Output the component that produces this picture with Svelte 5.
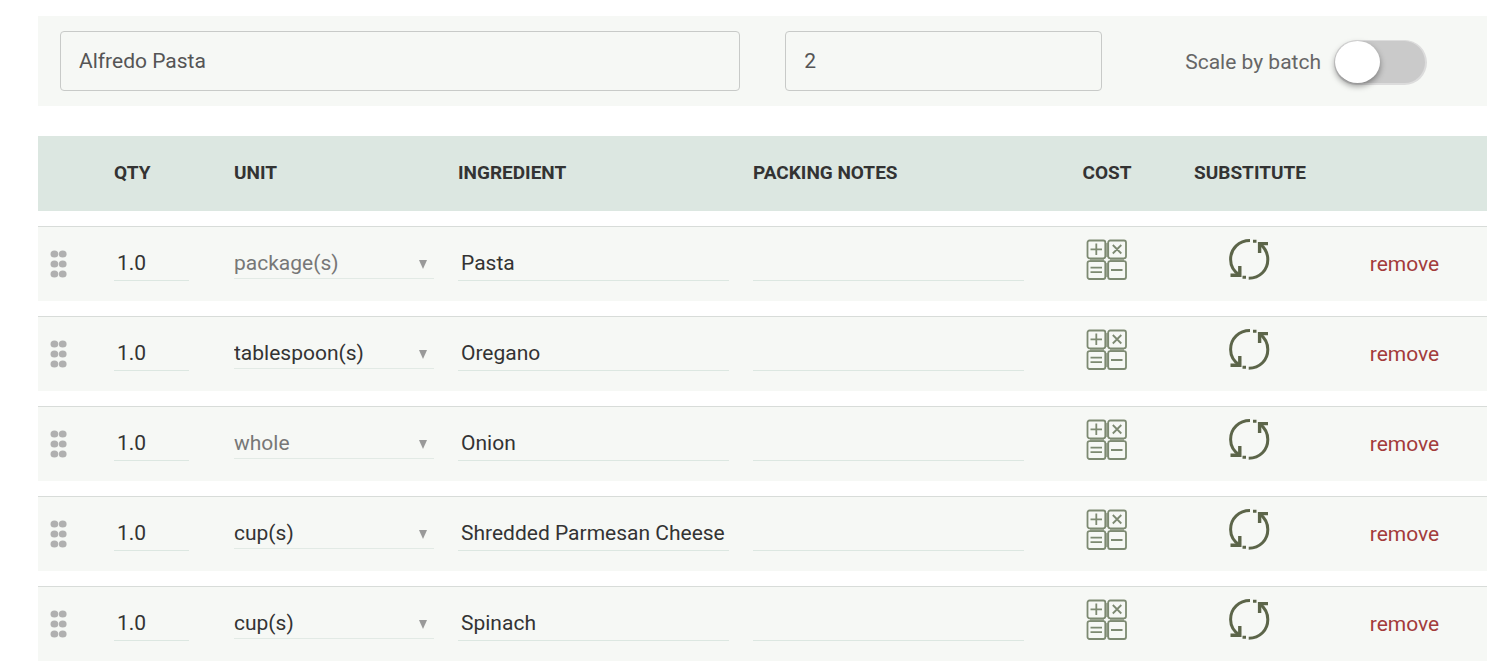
<script lang="ts">
	const units = ['package(s)', 'tablespoon(s)', 'whole', 'cup(s)'];

	let name = $state('Alfredo Pasta');
	let servings = $state('2');
	let scaleByBatch = $state(false);

	let rows = $state([
		{ id: 1, qty: '1.0', unit: 'package(s)', ingredient: 'Pasta', notes: '', muted: true },
		{ id: 2, qty: '1.0', unit: 'tablespoon(s)', ingredient: 'Oregano', notes: '', muted: false },
		{ id: 3, qty: '1.0', unit: 'whole', ingredient: 'Onion', notes: '', muted: true },
		{ id: 4, qty: '1.0', unit: 'cup(s)', ingredient: 'Shredded Parmesan Cheese', notes: '', muted: false },
		{ id: 5, qty: '1.0', unit: 'cup(s)', ingredient: 'Spinach', notes: '', muted: false }
	]);

	function remove(id: number) {
		rows = rows.filter((row) => row.id !== id);
	}
</script>

<main>
	<div class="recipe-bar">
		<input class="box" type="text" aria-label="Recipe name" bind:value={name} />
		<input class="box" type="text" aria-label="Servings" bind:value={servings} />
		<label class="scale">
			<span>Scale by batch</span>
			<input class="toggle" type="checkbox" role="switch" bind:checked={scaleByBatch} />
		</label>
	</div>

	<table>
		<colgroup>
			<col class="col-drag" />
			<col class="col-qty" />
			<col class="col-unit" />
			<col />
			<col />
			<col class="col-cost" />
			<col class="col-substitute" />
			<col class="col-remove" />
		</colgroup>
		<thead>
			<tr>
				<th></th>
				<th>QTY</th>
				<th>UNIT</th>
				<th>INGREDIENT</th>
				<th>PACKING NOTES</th>
				<th class="center">COST</th>
				<th class="center">SUBSTITUTE</th>
				<th></th>
			</tr>
		</thead>
		<tbody>
			{#each rows as row (row.id)}
				<tr>
					<td>
						<button class="icon drag" type="button" aria-label="Reorder">
							<svg width="17" height="28" viewBox="0 0 17 28" fill="#b0b0b0">
								{#each [4, 14, 24] as y}
									<ellipse cx="4.4" cy={y} rx="3.9" ry="3.5" />
									<ellipse cx="12.7" cy={y} rx="3.9" ry="3.5" />
								{/each}
							</svg>
						</button>
					</td>
					<td class="field"><input class="line qty" type="text" aria-label="Quantity" bind:value={row.qty} /></td>
					<td class="field">
						<div class="unit" class:muted={row.muted}>
							<select aria-label="Unit" bind:value={row.unit}>
								{#each units as unit}
									<option value={unit}>{unit}</option>
								{/each}
							</select>
							<svg class="arrow" width="8" height="9" viewBox="0 0 8 9">
								<path d="M0 0h8L4 9z" fill="#999" />
							</svg>
						</div>
					</td>
					<td class="field"><input class="line" type="text" aria-label="Ingredient" bind:value={row.ingredient} /></td>
					<td class="field"><input class="line" type="text" aria-label="Packing notes" bind:value={row.notes} /></td>
					<td class="raised">
						<button class="icon" type="button" aria-label="Cost">
							<svg width="42" height="42" viewBox="0 0 42 42" fill="none" stroke="#7d8a72" stroke-width="1.8">
								<path d="M4 20h14M4 21.8h14M24 20h14M24 21.8h14M20 4v14M21.8 4v14M20 24v14M21.8 24v14" stroke="#a5ae9c" stroke-width="2" />
								<rect x="1.5" y="1.5" width="17.8" height="17.8" rx="2" />
								<rect x="22.2" y="1.5" width="17.8" height="17.8" rx="2" />
								<rect x="1.5" y="22.2" width="17.8" height="17.8" rx="2" />
								<rect x="22.2" y="22.2" width="17.8" height="17.8" rx="2" />
								<path d="M4.5 10.3h11.5M10.3 4.500v11.500M26.800 6l8.500 8.500M35.300 6l-8.500 8.500M4.500 28.700h11.500M4.500 33.200h11.500M25 31h11.500" />
							</svg>
						</button>
					</td>
					<td class="raised">
						<button class="icon" type="button" aria-label="Substitute">
							<svg width="44" height="44" viewBox="0 0 44 44" fill="none" stroke="#5c6549" stroke-width="3">
								<path d="M22 2.600C11 2.600 2.600 10.500 2.600 21.500C2.600 28.500 6 33.500 11.500 37" />
								<path d="M2.500 37.300H11.800V28" stroke-width="3.400" />
								<path d="M20.700 40.200C32 40.200 39.800 32 39.800 21.500C39.800 15 37 10 32 6" />
								<path d="M40 5.600H31.600V15" stroke-width="3.400" />
								<path d="M25 3.200h3.500M14.500 39.200h3.500" />
							</svg>
						</button>
					</td>
					<td class="center">
						<button class="remove" type="button" onclick={() => remove(row.id)}>remove</button>
					</td>
				</tr>
			{/each}
		</tbody>
	</table>
</main>

<style>
	:global(body) {
		margin: 0;
		background: #fff;
	}
	main {
		padding: 16px 19px 0 38px;
		font-family: Roboto, 'Liberation Sans', sans-serif;
		font-size: 21px;
		color: #333;
	}
	input,
	select,
	button {
		box-sizing: border-box;
		margin: 0;
		font: inherit;
		color: inherit;
		background: transparent;
	}

	.recipe-bar {
		display: grid;
		grid-template-columns: 680fr 317fr auto;
		align-items: center;
		gap: 45px;
		padding: 15px 60px 15px 22px;
		background: #f6f8f5;
		color: #555;
	}
	.box {
		width: 100%;
		min-width: 0;
		height: 60px;
		padding: 0 18px;
		border: 1px solid #c8cac8;
		border-radius: 4px;
	}
	.scale {
		display: flex;
		align-items: center;
		gap: 13px;
		margin-left: 38px;
		padding-top: 2px;
		color: #666;
		white-space: nowrap;
	}
	.toggle {
		appearance: none;
		width: 93px;
		height: 45px;
		border: 2px solid #dcdcdc;
		border-top-width: 1px;
		border-left-width: 1px;
		border-radius: 23px;
		background: #cacaca;
		cursor: pointer;
	}
	.toggle::before {
		content: '';
		display: block;
		width: 45px;
		height: 42px;
		border-radius: 50%;
		background: #fff;
		box-shadow: 0 3px 6px rgba(0, 0, 0, 0.4);
		transition: margin-left 0.2s;
	}
	.toggle:checked::before {
		margin-left: 45px;
	}

	/* rows are separated by 15px; the spacing after the last one is dropped */
	table {
		width: 100%;
		margin: 15px 0 -15px;
		table-layout: fixed;
		border-spacing: 0 15px;
	}
	.col-drag {
		width: 64px;
	}
	.col-qty {
		width: 120px;
	}
	.col-unit {
		width: 224px;
	}
	.col-cost {
		width: 142px;
	}
	.col-substitute {
		width: 144px;
	}
	.col-remove {
		width: 165px;
	}
	th,
	td {
		box-sizing: border-box;
		height: 75px;
		padding: 0 12px;
		text-align: left;
		vertical-align: middle;
	}
	th {
		padding-bottom: 3px;
		background: #dce7e1;
		font-size: 19px;
		font-weight: 700;
		white-space: nowrap;
	}
	td {
		border-top: 1px solid #d8dcd9;
		background: #f6f8f5;
	}
	.center {
		text-align: center;
	}
	.field {
		padding-bottom: 2px;
	}
	.raised {
		padding-bottom: 9px;
	}

	.line {
		display: block;
		width: 100%;
		height: 36px;
		padding: 0 3px;
		border: 0;
		border-bottom: 1px solid #dce7e1;
	}
	.qty {
		width: 75px;
	}
	.unit {
		display: grid;
		align-items: center;
		height: 30px;
		border-bottom: 1px solid #e2eae5;
	}
	.unit select,
	.arrow {
		grid-area: 1 / 1;
	}
	.unit select {
		appearance: none;
		width: 100%;
		height: 30px;
		padding: 0;
		border: 0;
	}
	.muted {
		color: #777;
	}
	.arrow {
		justify-self: end;
		margin: 3px 7px 0 0;
		pointer-events: none;
	}
	.icon,
	.remove {
		padding: 0;
		border: 0;
		cursor: pointer;
	}
	.icon {
		display: block;
		margin: 0 auto;
	}
	.drag {
		margin: 0;
	}
	.icon svg {
		display: block;
	}
	.remove {
		color: #a33b3b;
	}
</style>
